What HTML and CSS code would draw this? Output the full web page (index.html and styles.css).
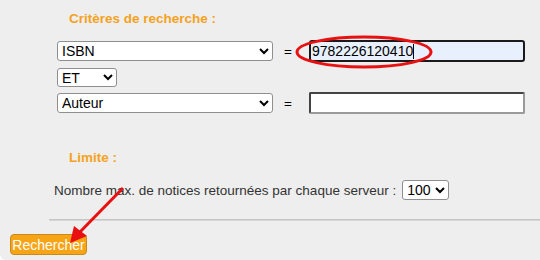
FILE: index.html
```
<!DOCTYPE html>
<html lang="fr">
<head>
<meta charset="utf-8">
<link rel="stylesheet" href="styles.css">
</head>
<body>
<div class="page">
  <h2 class="title">Critères de recherche :</h2>
  <div class="criteria">
    <div class="row r1">
      <select class="sel wide"><option>ISBN</option></select>
      <span class="eq">=</span>
      <span class="fieldwrap">
        <input class="field focused" type="text" value="9782226120410">
        <span class="caret"></span>
      </span>
    </div>
    <div class="row r2">
      <select class="sel small"><option>ET</option></select>
    </div>
    <div class="row r3">
      <select class="sel wide"><option>Auteur</option></select>
      <span class="eq">=</span>
      <input class="field plain" type="text" value="">
    </div>
  </div>
  <h2 class="title limit">Limite :</h2>
  <div class="maxrow">
    <span class="label">Nombre max. de notices retournées par chaque serveur :</span>
    <select class="sel num"><option>100</option></select>
  </div>
  <div class="rule"></div>
  <button class="btn" type="button">Rechercher</button>
  <svg class="annot" width="540" height="260" viewBox="0 0 540 260">
    <ellipse cx="364" cy="52" rx="67" ry="15" fill="none" stroke="#e81010" stroke-width="3"/>
    <line x1="123" y1="188" x2="78" y2="234" stroke="#e81010" stroke-width="3"/>
    <polygon points="70,243 74,226 87,236" fill="#e81010"/>
  </svg>
</div>
</body>
</html>
```
FILE: styles.css
```
html, body {
  margin: 0;
  padding: 0;
  background: #ffffff;
}
.page {
  position: relative;
  width: 540px;
  height: 260px;
  background: #eeeeee;
  font-family: "Liberation Sans", Arial, sans-serif;
  font-size: 13.5px;
  color: #333333;
  display: flex;
  flex-direction: column;
  align-items: flex-start;
  overflow: hidden;
  border-bottom-left-radius: 6px;
}
.title {
  margin: 11px 0 0 69px;
  font-size: 13.5px;
  line-height: 16px;
  font-weight: bold;
  color: #f5a21e;
}
.criteria {
  margin: 13px 0 0 57px;
  display: flex;
  flex-direction: column;
}
.row {
  display: flex;
  align-items: center;
}
.r1 { height: 22px; }
.r2 { height: 19px; margin-top: 6px; }
.r3 { height: 22px; margin-top: 5px; }
.sel {
  font-family: "Liberation Sans", Arial, sans-serif;
  font-size: 14px;
  color: #000;
  background: #fff;
  border: 1px solid #8f8f8f;
  border-radius: 3px;
  box-sizing: border-box;
  margin: 0;
}
.wide { width: 216px; height: 20px; }
.small { width: 60px; height: 19px; }
.num { width: 47px; height: 20px; margin-left: 6px; }
.eq {
  width: 36px;
  padding-left: 11px;
  box-sizing: border-box;
  color: #000;
  font-size: 13.5px;
}
.fieldwrap {
  position: relative;
  display: flex;
}
.field {
  width: 216px;
  height: 22px;
  box-sizing: border-box;
  margin: 0;
  padding: 0 1px;
  font-family: "Liberation Sans", Arial, sans-serif;
  font-size: 14px;
  color: #000;
}
.focused {
  background: #e8f0fe;
  border: 2px solid #1a1a1a;
  border-radius: 3px;
  outline: none;
}
.plain {
  background: #ffffff;
  border: 2px solid;
  border-color: #444 #9a9a9a #9a9a9a #444;
  border-radius: 2px;
}
.caret {
  position: absolute;
  left: 104px;
  top: 4px;
  width: 1px;
  height: 15px;
  background: #000;
}
.limit {
  margin-top: 36px;
}
.maxrow {
  margin: 14px 0 0 54px;
  height: 20px;
  display: flex;
  align-items: center;
}
.label {
  color: #333;
}
.rule {
  margin: 19px 0 0 49px;
  width: 491px;
  border-top: 1px solid #c6c6c6;
  border-bottom: 1px solid #d6d6d6;
}
.btn {
  margin: 13px 0 0 10px;
  width: 77px;
  height: 21px;
  padding: 0;
  font-family: "Liberation Sans", Arial, sans-serif;
  font-size: 14px;
  color: #ffffff;
  background: #f7a416;
  border: 1px solid #c98a1a;
  border-radius: 4px;
}
.annot {
  position: absolute;
  left: 0;
  top: 0;
  pointer-events: none;
}
```
